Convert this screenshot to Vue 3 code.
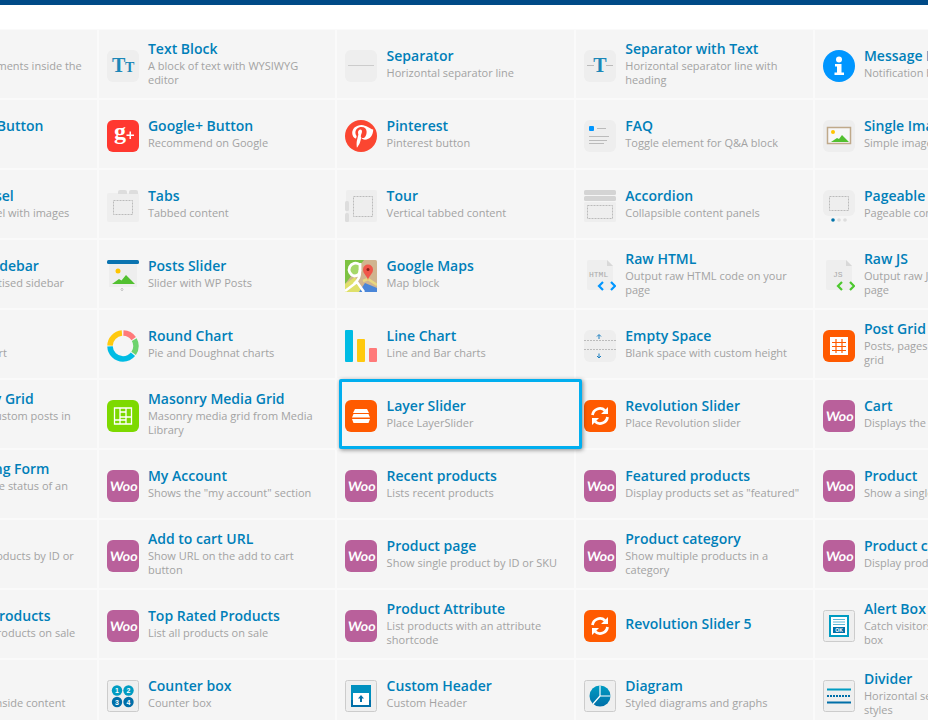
<template>
  <div class="page">
    <div class="topbar"></div>
    <div class="elements">
      <div
        v-for="item in items"
        :key="item.title"
        class="element"
        :class="{ selected: item.selected }"
      >
        <span v-if="item.icon" class="element-icon" v-html="icons[item.icon]"></span>
        <span v-else class="element-icon"></span>
        <div class="element-text">
          <div class="element-title">{{ item.title }}</div>
          <div v-if="item.desc" class="element-desc">{{ item.desc }}</div>
        </div>
      </div>
    </div>
  </div>
</template>

<script setup>
const svg = (body) => `<svg width="32" height="32" viewBox="0 0 32 32">${body}</svg>`;

const soft = '<rect width="32" height="32" rx="6" fill="#eee"/>';
const boxed = '<rect x=".5" y=".5" width="31" height="31" rx="2" fill="#efefef" stroke="#ccc"/>';
const dashed = (x, y, w, h) =>
  `<rect x="${x}" y="${y}" width="${w}" height="${h}" fill="none" stroke="#bbb" stroke-width="1" stroke-dasharray="2 1"/>`;
const orange = '<rect width="32" height="32" rx="6" fill="#ff5a00"/>';

const icons = {
  textBlock: svg(`${soft}<text x="5" y="22" font-family="Liberation Serif" font-weight="700" font-size="20" fill="#1b87b8">T</text><text x="18" y="22" font-family="Liberation Serif" font-weight="700" font-size="14" fill="#1b87b8">T</text>`),
  separator: svg(`${soft}<rect x="3" y="15" width="26" height="1" fill="#ccc"/>`),
  separatorText: svg(`${soft}<rect x="3" y="15" width="7" height="1" fill="#bbb"/><rect x="22" y="15" width="7" height="1" fill="#bbb"/><text x="16" y="22" text-anchor="middle" font-family="Liberation Serif" font-weight="700" font-size="20" fill="#1b87b8">T</text>`),
  message: svg('<circle cx="16" cy="16" r="16" fill="#0096ff"/><circle cx="16" cy="9.500" r="3" fill="#fff"/><path d="M12 14h6.500v8.500H21V25h-9.500v-2.500H14V16.500h-2z" fill="#fff"/>'),
  gplus: svg('<rect width="32" height="32" rx="6" fill="#ff3830"/><text x="7" y="19" font-family="Liberation Serif" font-weight="700" font-size="24" fill="#fff">g</text><path d="M19.500 14.500h3v-3H24v3h3V16h-3v3h-1.500v-3h-3z" fill="#fff"/>'),
  pinterest: svg('<circle cx="16" cy="16" r="16" fill="#fb4631"/><path transform="translate(-1.600 -1.600) scale(1.100)" d="M16.500 6C11.500 6 8 9.300 8 13.300c0 2.400 1.300 4.300 3 4.900.4.100.6-.1.700-.5l.3-1.200c.1-.4 0-.5-.2-.8-.6-.7-.9-1.500-.9-2.600 0-3 2.200-5.300 5.500-5.300 3 0 4.700 1.800 4.700 4.300 0 3.200-1.400 5.800-3.500 5.800-1.200 0-2-1-1.700-2.200.3-1.400 1-2.900 1-3.900 0-.9-.5-1.700-1.500-1.700-1.200 0-2.100 1.200-2.100 2.800 0 1 .3 1.700.3 1.700l-1.400 6c-.4 1.800-.1 4.500 0 5.800.1.200.2.200.3.100.2-.2 2-2.700 2.700-5 .2-.7 1-4 1-4 .5.900 1.900 1.800 3.400 1.800 4.500 0 7.500-4 7.500-9.200C24.100 9.600 20.800 6 16.500 6z" fill="#fff"/>'),
  faq: svg(`${soft}<rect x="5" y="6" width="5" height="5" rx="1" fill="#0096ff"/><rect x="13" y="8" width="9" height="1" fill="#bbb"/><rect x="5" y="16" width="20" height="1" fill="#bbb"/><rect x="5" y="20" width="18" height="1" fill="#bbb"/><rect x="5" y="23" width="15" height="1" fill="#bbb"/>`),
  image: svg(`${soft}<rect x="4.500" y="7.500" width="23" height="16" fill="#f7f7f7" stroke="#bfa98a" stroke-width="1.500"/><circle cx="10" cy="12" r="2" fill="#ffc400"/><path d="M8 22l6-4 2 1 3-4 7 7z" fill="#52c030"/>`),
  tabs: svg(`<path d="M0 5q0-2 2-2h28q2 0 2 2v25q0 2-2 2H2q-2 0-2-2z" fill="#eee"/><path d="M11 2q0-2 2-2h5q2 0 2 2v2h-9zM22 2q0-2 2-2h5q2 0 2 2v2h-9z" fill="#ddd"/>${dashed(6.5, 10.5, 19, 14)}`),
  tour: svg(`<rect x="1" y="0" width="31" height="32" rx="2" fill="#eee"/><rect x="0" y="11" width="4" height="10" rx="1.500" fill="#ddd"/><rect x="0" y="23" width="4" height="9" rx="1.500" fill="#ddd"/>${dashed(8.5, 6.5, 19, 20)}`),
  accordion: svg(`<rect width="32" height="5" rx="1.500" fill="#d4d4d4"/><rect y="6" width="32" height="5" rx="1.500" fill="#d4d4d4"/><rect y="12" width="32" height="20" rx="1.500" fill="#eee"/>${dashed(3.5, 15.5, 25, 13)}`),
  pageable: svg(`<rect width="32" height="26" rx="6" fill="#eee"/>${dashed(6.5, 6.5, 19, 14)}<circle cx="10" cy="30" r="1.800" fill="#0073aa"/><circle cx="16" cy="30" r="1.800" fill="#ddd"/><circle cx="22" cy="30" r="1.800" fill="#ddd"/>`),
  postsSlider: svg('<rect x="2" y="3" width="28" height="24" fill="#eee"/><rect width="32" height="4" rx="1.500" fill="#0a73b0"/><circle cx="11" cy="11" r="2.500" fill="#ffc400"/><path d="M5 24l7-5 2.500 1.500L19 15l9 9z" fill="#52c030"/><path d="M15 28l1 1.500-1 1.500-1-1.500z" fill="none" stroke="#aaa" stroke-width=".6"/>'),
  maps: svg('<rect width="32" height="32" rx="1.500" fill="#d0b48f"/><path d="M0 0h19L0 24z" fill="#7cc242"/><circle cx="9" cy="9" r="6" fill="#a6d86b"/><path d="M0 24l10-7 8 15H0z" fill="#dfe06a"/><path d="M14 32l6-9 12 5v4z" fill="#4a86d8"/><path d="M14.500 4.500A6.500 6.500 0 1 0 9 16c4 0 6-2 6-6V3" fill="none" stroke="#fff" stroke-width="2.800"/><path d="M15 10c0 7-1 9-6 14M0 31l12-9 7 10" fill="none" stroke="#fff" stroke-width="2.600"/><path d="M18 21l5-2 9 6" fill="none" stroke="#e8d880" stroke-width="2.500"/><path d="M23 20c-1-4.500-5-6-5-10.500a5 5 0 0 1 10 0c0 4.500-4 6-5 10.500z" fill="#f0564a"/><circle cx="23" cy="9.500" r="1.500" fill="#8b2018"/>'),
  rawHtml: svg('<path d="M3 2q0-2 2-2h18l6 6v24H5q-2 0-2-2z" fill="#eee"/><path d="M23 0l6 6h-6z" fill="#d8d8d8"/><text x="5" y="17" font-family="Liberation Mono" font-size="8" fill="#aaa">HTML</text><path d="M19 23l-4 4 4 4M27 23l4 4-4 4" transform="translate(0 -1)" fill="none" stroke="#0096ff" stroke-width="2.200"/>'),
  rawJs: svg('<path d="M3 2q0-2 2-2h18l6 6v24H5q-2 0-2-2z" fill="#eee"/><path d="M23 0l6 6h-6z" fill="#d8d8d8"/><text x="10" y="17" font-family="Liberation Mono" font-size="8" fill="#aaa">JS</text><path d="M19 23l-4 4 4 4M27 23l4 4-4 4" transform="translate(0 -1)" fill="none" stroke="#4cc82e" stroke-width="2.200"/>'),
  roundChart: svg('<g transform="rotate(-90 16 16)" fill="none" stroke-width="5.500"><circle cx="16" cy="16" r="13" pathLength="360" stroke="#ff7a7a" stroke-dasharray="53 307" stroke-dashoffset="-2"/><circle cx="16" cy="16" r="13" pathLength="360" stroke="#6dd36d" stroke-dasharray="65 295" stroke-dashoffset="-60"/><circle cx="16" cy="16" r="13" pathLength="360" stroke="#00bce4" stroke-dasharray="138 222" stroke-dashoffset="-130"/><circle cx="16" cy="16" r="13" pathLength="360" stroke="#ffc90e" stroke-dasharray="83 277" stroke-dashoffset="-272"/></g>'),
  lineChart: svg('<rect width="8" height="32" rx="1" fill="#00bce4"/><rect x="12" y="9" width="8" height="23" rx="1" fill="#ffc90e"/><rect x="24" y="18" width="8" height="14" rx="1" fill="#ff7a7a"/>'),
  emptySpace: svg(`${soft}<path d="M0 10.500h32M0 19.500h32" stroke="#bbb" stroke-dasharray="2 1"/><path d="M15 8.500V4.500M13 6l2-2 2 2M15 23v4M13 25.500l2 2 2-2" transform="translate(0 .5)" fill="none" stroke="#1a7fc0"/>`),
  postGrid: svg(`${orange}<rect x="7" y="7" width="18" height="18" fill="#fff"/><path d="M13 9v14M19 9v14M9 12.500h14M9 16.500h14M9 20.500h14" stroke="#ff5a00" stroke-width="1.200"/>`),
  masonry: svg('<rect width="32" height="32" rx="6" fill="#7dd900"/><path d="M7.500 8h17v16h-17zM13 8v16M19 8v16M13 12h6M13 17h11M7.500 20H19" fill="none" stroke="#fff" stroke-width="1.300"/>'),
  layerSlider: svg(`${orange}<path d="M10 9h12l2 4H8zM8.500 14h15l1.500 3.500H7zM7 19h18l-1.500 4h-15z" fill="#fff"/>`),
  revSlider: svg(`${orange}<path d="M8.500 15a7.500 7.500 0 0 1 12.500-4.500M23.500 17a7.500 7.500 0 0 1-12.500 4.500" fill="none" stroke="#fff" stroke-width="2.800"/><path d="M24 7v7h-7zM8 25v-7h7z" fill="#fff"/>`),
  woo: svg('<rect width="32" height="32" rx="6" fill="#b9609b"/><text transform="translate(16.300 20.500) skewX(-6)" text-anchor="middle" font-family="Lato" font-weight="700" font-size="13" fill="#fff">Woo</text>'),
  counter: svg(`${boxed}<circle cx="10" cy="10.500" r="5.200" fill="#009cc2"/><circle cx="21.500" cy="10.500" r="5.200" fill="#009cc2"/><circle cx="10" cy="22" r="5.200" fill="#006fa8"/><circle cx="21.500" cy="22" r="5.200" fill="#006fa8"/><g font-family="Liberation Sans" font-weight="700" font-size="7" fill="#fff" text-anchor="middle"><text x="10" y="13">1</text><text x="21.500" y="13">2</text><text x="10" y="24.500">3</text><text x="21.500" y="24.500">4</text></g>`),
  header: svg(`${boxed}<rect x="6" y="5" width="20" height="22" fill="#0090bf"/><rect x="6" y="20" width="20" height="7" fill="#006fa8"/><rect x="8" y="13" width="16" height="12" fill="#fff"/><path d="M16 15l3 3.500h-2V22h-2v-3.500h-2z" fill="#006fa8"/>`),
  alert: svg(`${boxed}<rect x="6" y="5" width="20" height="22" fill="#009cc2"/><rect x="8" y="7" width="16" height="18" fill="#fff"/><path d="M10 9.500h12M10 12h12M10 14.500h12" stroke="#5db8d6"/><rect x="10" y="17" width="12" height="6" fill="#006fa8"/><text x="16" y="22" text-anchor="middle" font-family="Liberation Sans" font-weight="700" font-size="5" fill="#fff">OK</text>`),
  diagram: svg(`${boxed}<defs><linearGradient id="pieFill" x1="0" y1="0" x2="0" y2="1"><stop offset="0" stop-color="#009cc2"/><stop offset="1" stop-color="#006fa8"/></linearGradient></defs><circle cx="16" cy="16" r="10.500" fill="url(#pieFill)"/><path d="M16 5.500V16h10.500M16 16l-7 8" fill="none" stroke="#fff" stroke-width="1.200"/>`),
  divider: svg(`${boxed}<rect x="4" y="8.500" width="24" height="2" fill="#009cc2"/><path d="M4 16h24" stroke="#006fa8" stroke-width="2" stroke-dasharray="2 1"/><rect x="4" y="21.500" width="24" height="2" fill="#006fa8"/>`)
};

const items = [
  { title: 'Row', desc: 'Place content elements inside the row' },
  { title: 'Text Block', desc: 'A block of text with WYSIWYG editor', icon: 'textBlock' },
  { title: 'Separator', desc: 'Horizontal separator line', icon: 'separator' },
  { title: 'Separator with Text', desc: 'Horizontal separator line with heading', icon: 'separatorText' },
  { title: 'Message Box', desc: 'Notification box', icon: 'message' },

  { title: 'Tweetmeme Button', desc: 'Share on Twitter' },
  { title: 'Google+ Button', desc: 'Recommend on Google', icon: 'gplus' },
  { title: 'Pinterest', desc: 'Pinterest button', icon: 'pinterest' },
  { title: 'FAQ', desc: 'Toggle element for Q&A block', icon: 'faq' },
  { title: 'Single Image', desc: 'Simple image with CSS animation', icon: 'image' },

  { title: 'Image Carousel', desc: 'Animated carousel with images' },
  { title: 'Tabs', desc: 'Tabbed content', icon: 'tabs' },
  { title: 'Tour', desc: 'Vertical tabbed content', icon: 'tour' },
  { title: 'Accordion', desc: 'Collapsible content panels', icon: 'accordion' },
  { title: 'Pageable Container', desc: 'Pageable content container', icon: 'pageable' },

  { title: 'Widgetised Sidebar', desc: 'WordPress widgetised sidebar' },
  { title: 'Posts Slider', desc: 'Slider with WP Posts', icon: 'postsSlider' },
  { title: 'Google Maps', desc: 'Map block', icon: 'maps' },
  { title: 'Raw HTML', desc: 'Output raw HTML code on your page', icon: 'rawHtml' },
  { title: 'Raw JS', desc: 'Output raw JavaScript into your page', icon: 'rawJs' },

  { title: 'Pie Chart', desc: 'Animated pie chart' },
  { title: 'Round Chart', desc: 'Pie and Doughnat charts', icon: 'roundChart' },
  { title: 'Line Chart', desc: 'Line and Bar charts', icon: 'lineChart' },
  { title: 'Empty Space', desc: 'Blank space with custom height', icon: 'emptySpace' },
  { title: 'Post Grid', desc: 'Posts, pages or custom posts in grid', icon: 'postGrid' },

  { title: 'Post Masonry Grid', desc: 'Posts, pages or custom posts in masonry grid' },
  { title: 'Masonry Media Grid', desc: 'Masonry media grid from Media Library', icon: 'masonry' },
  { title: 'Layer Slider', desc: 'Place LayerSlider', icon: 'layerSlider', selected: true },
  { title: 'Revolution Slider', desc: 'Place Revolution slider', icon: 'revSlider' },
  { title: 'Cart', desc: 'Displays the cart contents', icon: 'woo' },

  { title: 'Order Tracking Form', desc: 'Lets a user see the status of an order' },
  { title: 'My Account', desc: 'Shows the "my account" section', icon: 'woo' },
  { title: 'Recent products', desc: 'Lists recent products', icon: 'woo' },
  { title: 'Featured products', desc: 'Display products set as "featured"', icon: 'woo' },
  { title: 'Product', desc: 'Show a single product by ID', icon: 'woo' },

  { title: 'Products', desc: 'Show multiple products by ID or SKU' },
  { title: 'Add to cart URL', desc: 'Show URL on the add to cart button', icon: 'woo' },
  { title: 'Product page', desc: 'Show single product by ID or SKU', icon: 'woo' },
  { title: 'Product category', desc: 'Show multiple products in a category', icon: 'woo' },
  { title: 'Product categories', desc: 'Display product categories loop', icon: 'woo' },

  { title: 'Best Selling Products', desc: 'List best selling products on sale' },
  { title: 'Top Rated Products', desc: 'List all products on sale', icon: 'woo' },
  { title: 'Product Attribute', desc: 'List products with an attribute shortcode', icon: 'woo' },
  { title: 'Revolution Slider 5', icon: 'revSlider' },
  { title: 'Alert Box', desc: 'Catch visitors attention with alert box', icon: 'alert' },

  { title: 'Hover Box', desc: 'Place a text box inside content' },
  { title: 'Counter box', desc: 'Counter box', icon: 'counter' },
  { title: 'Custom Header', desc: 'Custom Header', icon: 'header' },
  { title: 'Diagram', desc: 'Styled diagrams and graphs', icon: 'diagram' },
  { title: 'Divider', desc: 'Horizontal separator in different styles', icon: 'divider' }
];
</script>

<style>
html,
body {
  margin: 0;
  background: #fff;
  overflow: hidden;
}
</style>

<style scoped>
.page {
  width: 928px;
  height: 720px;
  overflow: hidden;
  background: #fff;
  font-family: "Open Sans", sans-serif;
}

.topbar {
  height: 5px;
  background: #004a87;
  margin-bottom: 24px;
}

.elements {
  display: grid;
  grid-template-columns: repeat(5, 238.67px);
  grid-auto-rows: 70px;
  width: 1193.35px;
  margin-left: -141px;
  background: #fafafa;
}

.element {
  position: relative;
  display: flex;
  align-items: center;
  gap: 9.3px;
  margin: 1px;
  padding: 0 8px;
  background: #f5f5f5;
}

.selected {
  z-index: 2;
}

/* the picked card sits a little wider than its slot */
.selected::before {
  content: "";
  position: absolute;
  z-index: -1;
  top: -1px;
  left: 2px;
  right: -8px;
  bottom: -1px;
  box-sizing: border-box;
  background: #f5f5f5;
  border: 3px solid #00aeef;
  border-radius: 2px;
  box-shadow: 1px 1px 4px rgba(0, 0, 0, 0.45);
}

.element-icon {
  flex: none;
  display: block;
  width: 32px;
  height: 32px;
  margin-top: 4px;
}

.element-icon :deep(svg) {
  display: block;
}

.element-text {
  flex: 1;
  min-width: 0;
}

.element-title {
  font-size: 14px;
  font-weight: 600;
  line-height: 16px;
  color: #007fb9;
  white-space: nowrap;
}

.element-title:not(:last-child) {
  margin-bottom: 2px;
}

.element-desc {
  font-size: 11px;
  line-height: 14px;
  color: #a3a3a3;
}
</style>
